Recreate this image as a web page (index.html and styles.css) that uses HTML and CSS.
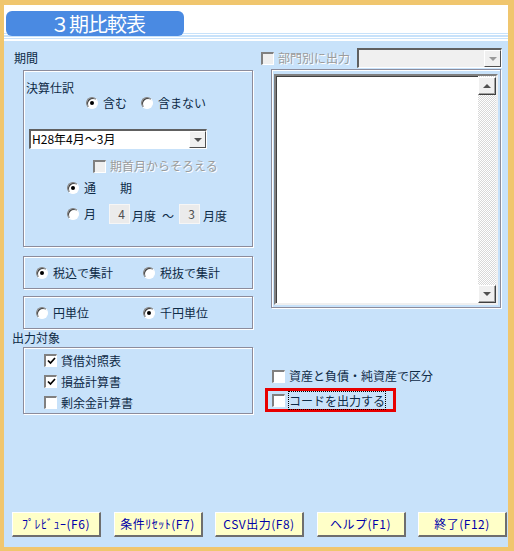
FILE: index.html
```html
<!DOCTYPE html>
<html lang="ja">
<head>
    <meta charset="UTF-8">
    <title>３期比較表</title>
    <link rel="stylesheet" href="styles.css">
</head>
<body>
    <div class="window">
        <header class="titlebar">
            <div class="title-pill">３期比較表</div>
        </header>

        <main class="panel">
            <div class="columns">
                <section class="col-left">
                    <div class="label">期間</div>
                    <div class="group group-period">
                        <div class="group-title">決算仕訳</div>
                        <div class="row row-journal">
                            <label class="opt opt-wide"><span class="radio on"></span>含む</label>
                            <label class="opt"><span class="radio"></span>含まない</label>
                        </div>
                        <div class="select select-period">
                            <span class="select-text">H28年4月～3月</span>
                            <span class="drop"></span>
                        </div>
                        <div class="row row-align">
                            <label class="opt disabled"><span class="check off"></span>期首月からそろえる</label>
                        </div>
                        <div class="row row-full">
                            <label class="opt"><span class="radio on"></span>通<span class="spacer"></span>期</label>
                        </div>
                        <div class="row row-month">
                            <label class="opt opt-month"><span class="radio"></span>月</label>
                            <span class="num">4</span>
                            <span class="unit">月度</span>
                            <span class="tilde">～</span>
                            <span class="num">3</span>
                            <span class="unit unit-last">月度</span>
                        </div>
                    </div>

                    <div class="group group-radio group-tax">
                        <label class="opt opt-half"><span class="radio on"></span>税込で集計</label>
                        <label class="opt"><span class="radio"></span>税抜で集計</label>
                    </div>

                    <div class="group group-radio group-unit">
                        <label class="opt opt-half"><span class="radio"></span>円単位</label>
                        <label class="opt"><span class="radio on"></span>千円単位</label>
                    </div>

                    <div class="label label-output">出力対象</div>
                    <div class="group group-output">
                        <label class="opt"><span class="check"><svg viewBox="0 0 9 8" width="9" height="8"><path d="M1 3.5 L3.5 6 L8 1" fill="none" stroke="#000" stroke-width="1.7"/></svg></span>貸借対照表</label>
                        <label class="opt"><span class="check"><svg viewBox="0 0 9 8" width="9" height="8"><path d="M1 3.5 L3.5 6 L8 1" fill="none" stroke="#000" stroke-width="1.7"/></svg></span>損益計算書</label>
                        <label class="opt"><span class="check"></span>剰余金計算書</label>
                    </div>
                </section>

                <section class="col-right">
                    <div class="dept-row">
                        <label class="opt disabled opt-dept"><span class="check off"></span>部門別に出力</label>
                        <div class="select select-dept">
                            <span class="select-text"></span>
                            <span class="drop drop-off"></span>
                        </div>
                    </div>
                    <div class="list-frame">
                        <div class="listbox">
                            <div class="items"></div>
                            <div class="scrollbar">
                                <span class="sb-btn"><span class="arrow-up"></span></span>
                                <span class="sb-track"></span>
                                <span class="sb-btn"><span class="arrow-down"></span></span>
                            </div>
                        </div>
                    </div>
                    <div class="assets-row">
                        <label class="opt"><span class="check"></span>資産と負債・純資産で区分</label>
                    </div>
                    <div class="red-box">
                        <label class="opt"><span class="check"></span><span class="focus-text">コードを出力する</span></label>
                    </div>
                </section>
            </div>

            <div class="buttons">
                <button class="btn">ﾌﾟﾚﾋﾞｭｰ(F6)</button>
                <button class="btn">条件ﾘｾｯﾄ(F7)</button>
                <button class="btn">CSV出力(F8)</button>
                <button class="btn">ヘルプ(F1)</button>
                <button class="btn">終了(F12)</button>
            </div>
        </main>
    </div>
</body>
</html>
```

FILE: styles.css
```css
* {
    box-sizing: border-box;
}
body {
    margin: 0;
    font-family: "Noto Sans CJK JP", "Noto Sans", sans-serif;
    font-size: 12px;
    color: #0e2a46;
}
.window {
    width: 514px;
    height: 551px;
    border-style: solid;
    border-color: #f0c66e;
    border-width: 5px 6px 4px 4px;
    display: flex;
    flex-direction: column;
}
.titlebar {
    height: 36px;
    flex: none;
    padding: 6px 0 0 2px;
    background: linear-gradient(to bottom,
        #fff 0 28px, #c8e2fa 28px 29px, #fff 29px 30px,
        #c8e2fa 30px 32px, #fff 32px 33px, #c8e2fa 33px 34px, #fff 34px 36px);
}
.title-pill {
    width: 178px;
    height: 25px;
    background: #4a8ae2;
    border-radius: 6px;
    color: #fff;
    font-size: 20px;
    line-height: 25px;
    padding-left: 44px;
    letter-spacing: -1px;
}
.panel {
    flex: 1;
    background: #c8e2fa;
    display: flex;
    flex-direction: column;
    padding-bottom: 10px;
}
.columns {
    flex: 1;
    display: flex;
}
.col-left {
    width: 252px;
    padding-top: 10px;
}
.col-right {
    flex: 1;
    padding-top: 7px;
}
.label {
    height: 14px;
    line-height: 14px;
    margin-left: 10px;
}
.label-output {
    margin: 2px 0 0 8px;
}
.group {
    margin-left: 19px;
    width: 230px;
    border: 1px solid #8c8c9c;
    box-shadow: inset 1px 1px 0 #fff, 1px 1px 0 #fff;
}
.group-period {
    height: 177px;
    margin-top: 5px;
}
.group-title {
    margin: 10px 0 0 2px;
    height: 14px;
    line-height: 14px;
}
.row {
    display: flex;
    align-items: center;
    height: 14px;
}
.opt {
    display: flex;
    align-items: center;
    line-height: 14px;
    white-space: nowrap;
}
.opt.disabled {
    color: #9c9c9c;
    text-shadow: 1px 1px 0 #fff;
}
.row-journal {
    margin-top: 1px;
    padding-left: 62px;
}
.opt-wide {
    width: 55px;
}
.row-align {
    margin-top: 10px;
    padding-left: 69px;
}
.row-full {
    margin-top: 8px;
    padding-left: 43px;
}
.spacer {
    width: 24px;
}
.row-month {
    margin-top: 9px;
    height: 20px;
    padding-left: 43px;
}
.opt-month {
    width: 42px;
}
.num {
    width: 21px;
    height: 20px;
    background: #ebebeb;
    border: 1px solid #f6f6f6;
    color: #505050;
    text-align: right;
    padding-right: 4px;
    line-height: 18px;
}
.unit {
    margin-left: 2px;
    line-height: 14px;
    padding-top: 4px;
}
.unit-last {
    margin-left: 3px;
}
.tilde {
    margin: 0 5px 0 6px;
    line-height: 14px;
    padding-top: 4px;
}

/* radio / checkbox */
.radio {
    flex: none;
    width: 12px;
    height: 12px;
    margin-right: 5px;
    border-radius: 50%;
    background: #fff;
    border: 1px solid;
    border-color: #808080 #fff #fff #808080;
    box-shadow: inset 1px 1px 0 #404040;
    display: inline-flex;
    align-items: center;
    justify-content: center;
}
.radio.on::after {
    content: "";
    width: 4px;
    height: 4px;
    border-radius: 50%;
    background: #000;
}
.check {
    flex: none;
    width: 13px;
    height: 13px;
    margin-right: 4px;
    background: #fff;
    border-style: solid;
    border-width: 2px 1px 1px 2px;
    border-color: #808080 #fff #fff #808080;
    display: inline-flex;
    align-items: center;
    justify-content: center;
}
.check.off {
    background: #efefef;
}

/* combo boxes */
.select {
    display: flex;
    height: 20px;
    background: #fff;
    border-style: solid;
    border-width: 2px 1px 1px 2px;
    border-color: #606060 #fff #fff #606060;
}
.select-text {
    flex: 1;
    line-height: 16px;
    padding-left: 1px;
    color: #000;
}
.drop {
    width: 17px;
    background: #f0f0f0;
    border: 1px solid;
    border-color: #fff #505050 #505050 #fff;
    display: flex;
    align-items: center;
    justify-content: center;
}
.drop::after {
    content: "";
    border-style: solid;
    border-width: 4px 4px 0 4px;
    border-color: #505050 transparent transparent transparent;
}
.drop-off::after {
    border-top-color: #9a9a9a;
}
.select-period {
    margin: 19px 0 0 5px;
    width: 178px;
}
.group-radio {
    height: 33px;
    display: flex;
    align-items: center;
    padding-left: 12px;
}
.group-tax {
    margin-top: 9px;
}
.group-unit {
    margin-top: 7px;
}
.opt-half {
    width: 107px;
}
.group-output {
    margin-top: 2px;
    height: 67px;
    padding: 6px 0 0 20px;
    display: flex;
    flex-direction: column;
    gap: 8px;
}
.group-output .opt {
    height: 13px;
}

/* right column */
.dept-row {
    display: flex;
    align-items: center;
    height: 20px;
    padding-left: 5px;
}
.opt-dept {
    width: 96px;
}
.select-dept {
    width: 145px;
    background: #f0f0f0;
}
.list-frame {
    margin: 1px 0 0 15px;
    width: 230px;
    height: 239px;
    border: 1px solid #8c8c9c;
    box-shadow: inset 1px 1px 0 #fff, 1px 1px 0 #fff;
    padding: 4px 2px 2px 2px;
}
.listbox {
    height: 100%;
    display: flex;
    background: #fff;
    border: 2px solid;
    border-color: #808080 #f0f0f0 #f0f0f0 #808080;
    box-shadow: inset 1px 1px 0 #404040;
}
.items {
    flex: 1;
}
.scrollbar {
    width: 18px;
    display: flex;
    flex-direction: column;
    padding-top: 1px;
    background: repeating-conic-gradient(#d8d8d8 0 25%, #fff 0 50%) 0 0 / 2px 2px;
}
.sb-btn {
    height: 18px;
    background: #f0f0f0;
    border: 1px solid;
    border-color: #fff #404040 #404040 #fff;
    box-shadow: inset -1px -1px 0 #a0a0a0;
    display: flex;
    align-items: center;
    justify-content: center;
}
.sb-track {
    flex: 1;
}
.arrow-up {
    border-style: solid;
    border-width: 0 4px 4px 4px;
    border-color: transparent transparent #505050 transparent;
}
.arrow-down {
    border-style: solid;
    border-width: 4px 4px 0 4px;
    border-color: #505050 transparent transparent transparent;
}
.assets-row {
    margin-top: 61px;
    padding-left: 16px;
    height: 14px;
    display: flex;
    align-items: center;
}
.red-box {
    margin: 5px 0 0 9px;
    width: 131px;
    height: 24px;
    border: 3px solid #e80000;
    display: flex;
    align-items: center;
    padding-left: 4px;
}
.focus-text {
    outline: 1px dotted #000;
    line-height: 17px;
}

/* bottom buttons */
.buttons {
    display: flex;
    justify-content: space-between;
    padding: 0 1px 0 8px;
}
.btn {
    width: 89px;
    height: 25px;
    padding: 0;
    background: #ffffc8;
    border-style: solid;
    border-width: 1px 2px 2px 1px;
    border-color: #fff #6e6e6e #6e6e6e #fff;
    color: #0000a8;
    font-family: "Noto Sans CJK JP", sans-serif;
    font-weight: 400;
    font-size: 12px;
    line-height: 22px;
    letter-spacing: 0.5px;
    text-align: center;
}
```
